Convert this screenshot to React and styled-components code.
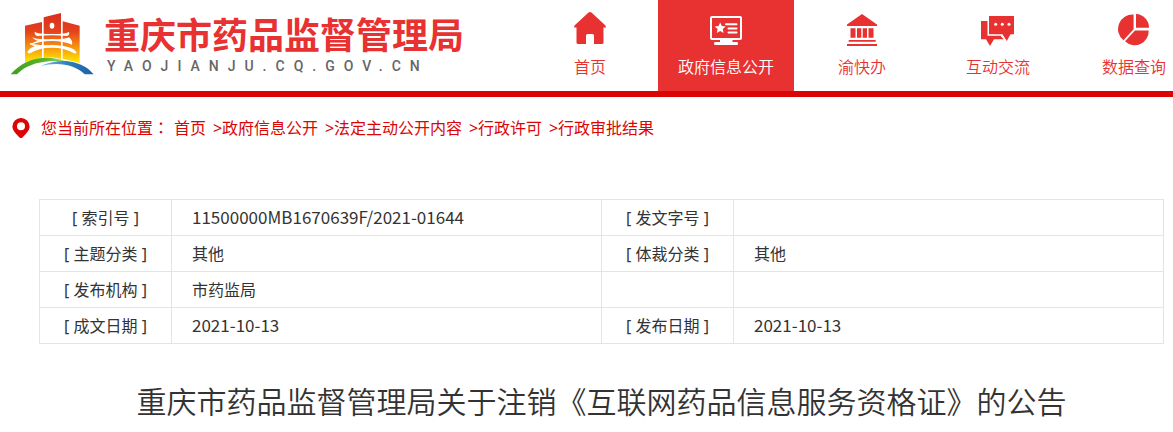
import React from "react";
import styled, { createGlobalStyle } from "styled-components";

const GlobalStyle = createGlobalStyle`
  * {
    box-sizing: border-box;
  }
  body {
    margin: 0;
    background: #fff;
    color: #333;
    font-family: "Noto Sans", "Noto Sans CJK SC", sans-serif;
    font-size: 16px;
    line-height: 24px;
    overflow-x: hidden;
  }
  a {
    color: inherit;
    text-decoration: none;
  }
`;

const Header = styled.header`
  display: flex;
  border-bottom: 6px solid #db0505;
  overflow: hidden;
`;

const Brand = styled.a`
  display: flex;
  align-items: flex-start;
  gap: 9px;
  flex: 0 0 522px;
  padding: 10px 0 0 10px;
`;

const BrandText = styled.div`
  display: flex;
  flex-direction: column;
  padding-top: 2px;
`;

const BrandName = styled.strong`
  color: #e83232;
  font-family: "Noto Sans CJK SC", sans-serif;
  font-size: 36px;
  font-weight: 700;
  line-height: 42px;
  white-space: nowrap;
`;

const BrandDomain = styled.span`
  padding-left: 3px;
  color: #666;
  font-family: Roboto, sans-serif;
  font-size: 14px;
  font-weight: 500;
  line-height: 24px;
  letter-spacing: 9px;
`;

const Nav = styled.nav`
  display: flex;
`;

const NavItem = styled.a`
  display: flex;
  flex: 0 0 136px;
  flex-direction: column;
  align-items: center;
  gap: 7px;
  height: 91px;
  padding-top: 12px;
  font-weight: 350;
  color: ${(props) => (props.$active ? "#fff" : "#e83232")};
  background: ${(props) => (props.$active ? "#e83232" : "transparent")};
`;

const NavText = styled.span`
  font-family: "Noto Sans CJK SC", sans-serif;
  line-height: 22px;
`;

const Breadcrumb = styled.nav`
  display: flex;
  align-items: center;
  padding: 19px 12px 0;
  color: #db0505;
  white-space: nowrap;
`;

const CrumbLabel = styled.span`
  margin: 0 5px 0 11px;
`;

const Colon = styled.span`
  font-family: "Noto Sans CJK TC", sans-serif;
  line-height: 1;
`;

const Separator = styled.span`
  width: 16px;
  text-align: right;
`;

const Content = styled.main`
  padding: 59px 9px 0 39px;
`;

const InfoTable = styled.table`
  width: 100%;
  border-collapse: collapse;
  table-layout: fixed;
`;

const Label = styled.th`
  width: ${(props) => props.$width};
  height: 36px;
  padding: 0;
  border: 1px solid #e4e4e4;
  font-weight: 400;
  text-align: center;
`;

const Value = styled.td`
  height: 36px;
  padding: 0 20px;
  border: 1px solid #e4e4e4;
`;

const Code = styled.span`
  font-family: "Noto Sans CJK SC", sans-serif;
  font-size: 17px;
  line-height: 22px;
`;

const Title = styled.h1`
  margin: 34px 0 0;
  font-family: "Noto Sans CJK SC", sans-serif;
  font-size: 30px;
  font-weight: 350;
  line-height: 44px;
  text-align: center;
`;

const Logo = () => (
  <svg width="85" height="67" viewBox="30 30 255 201" aria-hidden="true">
    <defs>
      <linearGradient id="tower" gradientUnits="userSpaceOnUse" x1="0" y1="45" x2="0" y2="185">
        <stop offset="0" stopColor="#d9301f" />
        <stop offset="0.35" stopColor="#e4421c" />
        <stop offset="0.65" stopColor="#f58a12" />
        <stop offset="1" stopColor="#ffe500" />
      </linearGradient>
      <linearGradient id="green" x1="0" x2="1">
        <stop offset="0" stopColor="#3f9f22" />
        <stop offset="0.6" stopColor="#5cb52a" />
        <stop offset="1" stopColor="#b5d98a" />
      </linearGradient>
      <linearGradient id="blue" x1="0" x2="1">
        <stop offset="0" stopColor="#7fc4e4" />
        <stop offset="0.5" stopColor="#2f7fbd" />
        <stop offset="1" stopColor="#1c5fa5" />
      </linearGradient>
    </defs>
    <g fill="url(#tower)">
      <path d="M75 77 126 66V174Q98 177 75 188Z" />
      <path d="M131 52 183 39V177Q157 170 131 173Z" />
      <path d="M188 64 239 77V189Q214 183 188 176Z" />
    </g>
    <ellipse cx="156" cy="77" rx="7" ry="9" fill="#fff" />
    <g fill="#fff">
      <path d="M104 95Q110 102 156 102T207 95Q210 105 200 108Q156 103 112 108Q103 105 104 95Z" />
      <path d="M96 111Q108 120 156 117Q196 119 207 112Q219 122 216 134Q190 123 156 123Q118 123 92 135Q86 128 96 130Q108 124 112 122Q102 120 96 111Z" />
      <path d="M82 157Q88 144 104 139Q94 138 88 130Q108 137 156 135Q220 137 230 158Q228 161 222 160Q195 143 156 143Q116 143 90 160Q84 161 82 157Z" />
    </g>
    <path d="M32 223C60 190 98 173 140 173C168 173 190 180 207 188C175 180 118 179 73 205Q60 214 51 223Z" fill="url(#green)" />
    <path d="M121 199C150 184 192 178 226 188C250 195 267 206 281 223H254C227 196 176 183 121 199Z" fill="url(#blue)" />
  </svg>
);

const icons = {
  home: (
    <path d="M18 0Q19 0 20 1L33 13Q34 14 34 15.500H31.500V30.500Q31.500 32 30 32H22V23.500Q22 22 20.500 22H15.500Q14 22 14 23.500V32H6Q4.500 32 4.500 30.500V15.500H2Q2 14 3 13L16 1Q17 0 18 0Z" />
  ),
  screen: (
    <>
      <rect x="3" y="5" width="30" height="22" rx="1" fill="none" stroke="currentColor" strokeWidth="2" />
      <path d="M12 28H24.500V30H29Q30 30 30 31.500T29 33H7Q6 33 6 31.500T7 30H12Z" />
      <path d="M12.200 10.500 13.800 14 17.700 14.400 14.800 17 15.600 21 12.200 19 8.800 21 9.600 17 6.700 14.400 10.600 14Z" />
      <path d="M18 12.200H28.500M20.500 16.500H28.500M20.500 20.500H28.500" fill="none" stroke="currentColor" strokeWidth="2" strokeLinecap="round" />
    </>
  ),
  hall: (
    <path d="M18 2 33 12.500V14H3V12.500ZM6.500 16.300H11.500V25.700H6.500ZM13 16.300H17.300V25.700H13ZM18.700 16.300H23V25.700H18.700ZM24.500 16.300H29.500V25.700H24.500ZM4.700 28H31.700V29.800H4.700ZM3 32H33V34H3Z" />
  ),
  chat: (
    <>
      <path d="M1 9H7.500V23.800H20.500L23.700 27.300H14L10 34 6 27.300H1Z" />
      <path d="M9 4H34V22.300H30.500L26.800 29 22.500 22.300H9Z" />
      <g fill="#fff">
        <circle cx="15.700" cy="12.300" r="1.500" />
        <circle cx="22.300" cy="12.300" r="1.500" />
        <circle cx="29" cy="12.300" r="1.500" />
      </g>
    </>
  ),
  pie: (
    <>
      <path d="M20 2A13.500 13.500 0 0 1 33 15.700H20Z" />
      <path d="M17.600 2.500V17.300L7.500 28.300A14.500 14.500 0 0 1 17.600 2.500Z" />
      <path d="M19 18.500H32.700A14 14 0 0 1 9 29.200Z" />
    </>
  ),
};

const NavIcon = ({ name }) => (
  <svg width="36" height="36" viewBox="0 0 36 36" fill="currentColor" aria-hidden="true">
    {icons[name]}
  </svg>
);

const PinIcon = () => (
  <svg width="18" height="20" viewBox="0 0 18 20" fill="currentColor" aria-hidden="true">
    <path fillRule="evenodd" d="M9 0A8.500 8.500 0 0 1 17.600 8.500C17.600 13 13.500 16 10.500 19.400Q9 20.600 7.500 19.400C4.500 16 .4 13 .4 8.500A8.500 8.500 0 0 1 9 0ZM9 4.300A4 4 0 1 0 9 12.300A4 4 0 1 0 9 4.300Z" />
  </svg>
);

const navList = [
  { icon: "home", text: "首页" },
  { icon: "screen", text: "政府信息公开", active: true },
  { icon: "hall", text: "渝快办" },
  { icon: "chat", text: "互动交流" },
  { icon: "pie", text: "数据查询" },
];

const crumbs = ["首页", "政府信息公开", "法定主动公开内容", "行政许可", "行政审批结果"];

const rows = [
  ["[ 索引号 ]", "11500000MB1670639F/2021-01644", "[ 发文字号 ]", ""],
  ["[ 主题分类 ]", "其他", "[ 体裁分类 ]", "其他"],
  ["[ 发布机构 ]", "市药监局", "", ""],
  ["[ 成文日期 ]", "2021-10-13", "[ 发布日期 ]", "2021-10-13"],
];

const renderValue = (value) => (/^\d/.test(value) ? <Code>{value}</Code> : value);

const App = () => {
  return (
    <>
      <GlobalStyle />
      <Header>
        <Brand href="#">
          <Logo />
          <BrandText>
            <BrandName>重庆市药品监督管理局</BrandName>
            <BrandDomain>YAOJIANJU.CQ.GOV.CN</BrandDomain>
          </BrandText>
        </Brand>
        <Nav>
          {navList.map((item) => (
            <NavItem key={item.text} href="#" $active={item.active}>
              <NavIcon name={item.icon} />
              <NavText>{item.text}</NavText>
            </NavItem>
          ))}
        </Nav>
      </Header>
      <Breadcrumb>
        <PinIcon />
        <CrumbLabel>
          您当前所在位置<Colon lang="zh-TW">：</Colon>
        </CrumbLabel>
        {crumbs.map((crumb, idx) => (
          <React.Fragment key={crumb}>
            {idx > 0 && <Separator>&gt;</Separator>}
            <a href="#">{crumb}</a>
          </React.Fragment>
        ))}
      </Breadcrumb>
      <Content>
        <InfoTable>
          <tbody>
            {rows.map(([label, value, label2, value2]) => (
              <tr key={label}>
                <Label scope="row" $width="132px">{label}</Label>
                <Value>{renderValue(value)}</Value>
                <Label scope="row" $width="132px">{label2}</Label>
                <Value>{renderValue(value2)}</Value>
              </tr>
            ))}
          </tbody>
        </InfoTable>
        <Title>重庆市药品监督管理局关于注销《互联网药品信息服务资格证》的公告</Title>
      </Content>
    </>
  );
};

export default App;
